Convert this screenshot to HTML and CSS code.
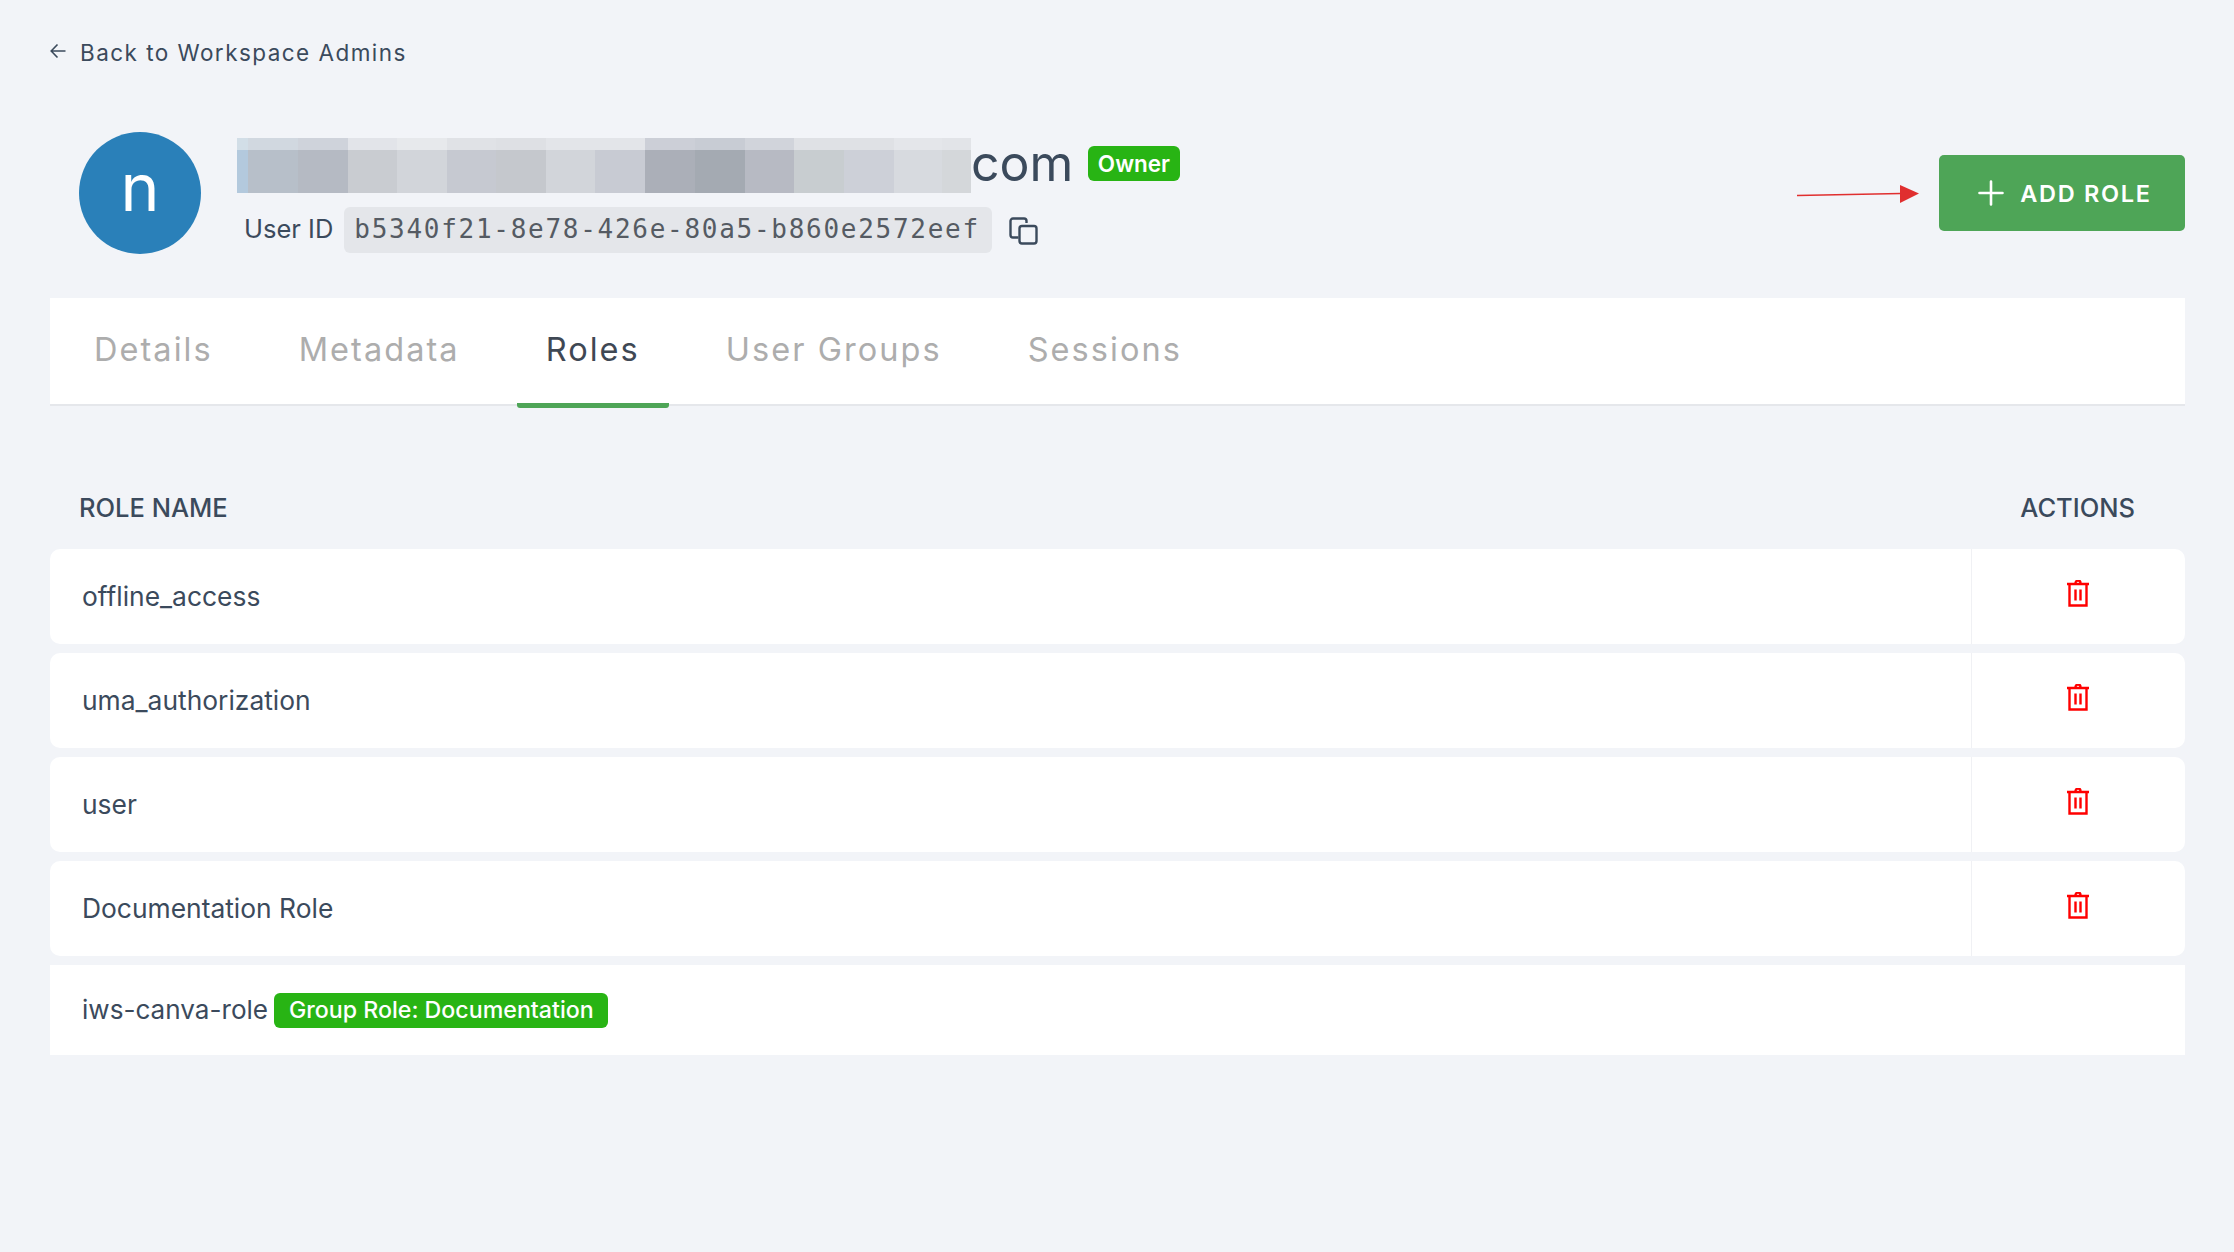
FILE: index.html
```html
<!DOCTYPE html>
<html>
<head>
  <meta charset="utf-8">
  <title>Workspace Admin Roles</title>
  <link rel="stylesheet" href="styles.css">
</head>

<body>
  <div class="page">
    <a class="back-link">
      <svg class="back-icon" viewBox="0 0 16 16" fill="none" stroke="currentColor" stroke-width="1.6">
        <path d="M15.5 8H1.5M7.5 1.5L1.2 8l6.3 6.5"/>
      </svg>
      Back to Workspace Admins
    </a>

    <div class="header">
      <div class="avatar">n</div>
      <div class="user-info">
        <div class="user-name">
          <span class="blurred"></span><span class="domain">com</span>
          <span class="badge badge-owner">Owner</span>
        </div>
        <div class="user-id">
          <span class="id-label">User ID</span>
          <code class="id-value">b5340f21-8e78-426e-80a5-b860e2572eef</code>
          <svg class="copy-icon" viewBox="0 0 29 28" fill="none" stroke="#3b4a5c" stroke-width="2.4">
            <rect x="10.5" y="9" width="17" height="17.5" rx="2.5"/>
            <path d="M9.5 20.5H4a2.5 2.5 0 0 1-2.5-2.5V4A2.5 2.5 0 0 1 4 1.5h11A2.5 2.5 0 0 1 17.5 4v2"/>
          </svg>
        </div>
      </div>
      <svg class="pointer" viewBox="0 0 122 20">
        <path d="M0 11.5L104 9.5" stroke="#e02f2f" stroke-width="1.6"/>
        <path d="M103 1L122 9.5L103 19z" fill="#e02f2f"/>
      </svg>
      <button class="add-role">
        <svg class="plus-icon" viewBox="0 0 26 26" stroke="#fff" stroke-width="2.6" stroke-linecap="round">
          <path d="M13 1.5v23M1.5 13h23"/>
        </svg>
        ADD ROLE
      </button>
    </div>

    <div class="tabs">
      <div class="tab">Details</div>
      <div class="tab">Metadata</div>
      <div class="tab active">Roles</div>
      <div class="tab">User Groups</div>
      <div class="tab">Sessions</div>
    </div>

    <div class="table-head">
      <span>ROLE NAME</span>
      <span class="head-actions">ACTIONS</span>
    </div>

    <div class="roles">
      <div class="role-row">
        <div class="role-name">offline_access</div>
        <div class="role-actions">
          <svg class="trash" viewBox="0 0 22 27" fill="none" stroke="#f00" stroke-width="2.4"><path d="M0 4h22M8.5 3a2.5 2.5 0 0 1 5 0M2.5 4v21.5h17V4M8.5 9.5v11M13.5 9.5v11"/></svg>
        </div>
      </div>
      <div class="role-row">
        <div class="role-name">uma_authorization</div>
        <div class="role-actions">
          <svg class="trash" viewBox="0 0 22 27" fill="none" stroke="#f00" stroke-width="2.4"><path d="M0 4h22M8.5 3a2.5 2.5 0 0 1 5 0M2.5 4v21.5h17V4M8.5 9.5v11M13.5 9.5v11"/></svg>
        </div>
      </div>
      <div class="role-row">
        <div class="role-name">user</div>
        <div class="role-actions">
          <svg class="trash" viewBox="0 0 22 27" fill="none" stroke="#f00" stroke-width="2.4"><path d="M0 4h22M8.5 3a2.5 2.5 0 0 1 5 0M2.5 4v21.5h17V4M8.5 9.5v11M13.5 9.5v11"/></svg>
        </div>
      </div>
      <div class="role-row">
        <div class="role-name">Documentation Role</div>
        <div class="role-actions">
          <svg class="trash" viewBox="0 0 22 27" fill="none" stroke="#f00" stroke-width="2.4"><path d="M0 4h22M8.5 3a2.5 2.5 0 0 1 5 0M2.5 4v21.5h17V4M8.5 9.5v11M13.5 9.5v11"/></svg>
        </div>
      </div>
      <div class="role-row group-row">
        <div class="role-name">iws-canva-role <span class="badge badge-group">Group Role: Documentation</span></div>
      </div>
    </div>
  </div>
</body>
</html>
```

FILE: styles.css
```css
* {
  box-sizing: border-box;
}

body {
  margin: 0;
  background: #f2f4f8;
  color: #3b4a5c;
  font-family: Inter, "Liberation Sans", sans-serif;
}

.page {
  width: 2234px;
  height: 1252px;
  padding: 37px 49px 0 50px;
  overflow: hidden;
}

/* back link */
.back-link {
  display: flex;
  align-items: center;
  gap: 14px;
  height: 30px;
  font-size: 22.5px;
  letter-spacing: 1.45px;
}

.back-icon {
  width: 16px;
  height: 16px;
  margin-top: -2px;
}

/* header */
.header {
  display: flex;
  align-items: flex-start;
  margin-top: 65px;
  padding-left: 29px;
  height: 166px;
}

.avatar {
  width: 122px;
  height: 122px;
  border-radius: 50%;
  background: #2a80b9;
  color: #fff;
  font-size: 66px;
  line-height: 110px;
  text-align: center;
  flex: none;
}

.user-info {
  margin-left: 36px;
  margin-top: 6px;
  flex: 1;
}

.user-name {
  display: flex;
  align-items: flex-start;
  height: 55px;
}

.blurred {
  width: 734px;
  height: 55px;
  background:
    linear-gradient(90deg, #d2dee7 0 11px, #d1d8e0 11px 61px, #cfd3db 61px 111px, #e2e4e9 111px 160px, #e7e9ec 160px 210px, #e0e2e6 210px 259px, #dee0e4 259px 309px, #e3e5e9 309px 358px, #e3e5e9 358px 408px, #cccfd7 408px 458px, #c8ccd4 458px 508px, #d1d4db 508px 557px, #dfe1e5 557px 607px, #dfe1e5 607px 657px, #e4e6ea 657px 705px, #e2e4e8 705px 734px) top / 100% 12px no-repeat,
    linear-gradient(90deg, #b3c9dd 0 11px, #b7bfc9 11px 61px, #b5bac3 61px 111px, #c9ccd1 111px 160px, #d2d5da 160px 210px, #c6c9d1 210px 259px, #c5c8cd 259px 309px, #d2d5da 309px 358px, #c8cbd3 358px 408px, #abafb8 408px 458px, #a4aab2 458px 508px, #b7bac3 508px 557px, #c8cdd0 557px 607px, #cdd0d8 607px 657px, #d7dadf 657px 705px, #d4d7da 705px 734px);
}

.domain {
  font-size: 50px;
  line-height: 50px;
}

.badge {
  display: inline-block;
  background: #28b414;
  color: #fff;
  font-weight: 600;
  border-radius: 6px;
}

.badge-owner {
  margin-left: 15px;
  margin-top: 8px;
  height: 35px;
  line-height: 35px;
  padding: 0 9.5px;
  font-size: 22.5px;
}

.user-id {
  display: flex;
  align-items: center;
  margin-top: 14px;
  padding-left: 7px;
}

.id-label {
  font-size: 25.5px;
  line-height: 30px;
  margin-top: -2px;
  margin-right: 11px;
}

.id-value {
  background: #e4e6ea;
  color: #555b63;
  border-radius: 6px;
  height: 46px;
  line-height: 44px;
  padding: 0 12px 0 10px;
  font-family: "DejaVu Sans Mono", monospace;
  font-size: 26px;
  letter-spacing: 1.72px;
}

.copy-icon {
  width: 29px;
  height: 28px;
  margin-left: 17px;
  margin-top: 2px;
}

.pointer {
  width: 122px;
  height: 20px;
  margin-top: 52px;
  margin-right: 20px;
  flex: none;
}

.add-role {
  display: flex;
  align-items: center;
  justify-content: center;
  gap: 16px;
  width: 246px;
  height: 76px;
  margin-top: 23px;
  padding: 0 0 0 6px;
  border: 0;
  border-radius: 5px;
  background: #4ea557;
  color: #fff;
  font-family: inherit;
  font-size: 23.5px;
  font-weight: 600;
  letter-spacing: 1.7px;
  flex: none;
}

.plus-icon {
  width: 26px;
  height: 26px;
}

/* tabs */
.tabs {
  display: flex;
  gap: 28px;
  height: 108px;
  padding-left: 15px;
  background: #fff;
  border-bottom: 2px solid #e5e7eb;
}

.tab {
  height: 110px;
  padding: 32px 29px 0;
  color: #adadad;
  font-size: 32.5px;
  letter-spacing: 2.05px;
}

.tab.active {
  color: #3f4854;
  border-bottom: 5px solid #4ea557;
  border-radius: 0 0 3px 3px;
}

/* table */
.table-head {
  display: flex;
  justify-content: space-between;
  margin-top: 86px;
  padding: 0 50px 0 29px;
  height: 57px;
  font-size: 25.5px;
  font-weight: 500;
}

.roles {
  display: flex;
  flex-direction: column;
  gap: 9px;
}

.role-row {
  display: flex;
  height: 95px;
  background: #fff;
  border-radius: 10px;
}

.group-row {
  height: 90px;
  border-radius: 0;
}

.role-name {
  flex: 1;
  padding: 31px 0 0 32px;
  font-size: 26.4px;
  line-height: 32px;
}

.group-row .role-name {
  padding-top: 28px;
  font-size: 26.1px;
}

.badge-group {
  height: 35px;
  line-height: 35px;
  padding: 0 14.5px;
  margin-left: -1px;
  font-size: 23.2px;
  font-weight: 500;
  vertical-align: 1px;
}

.role-actions {
  width: 214px;
  padding: 31px 2px 0 0;
  border-left: 1px solid #f0f1f4;
  text-align: center;
}

.trash {
  width: 22px;
  height: 27px;
}
```
